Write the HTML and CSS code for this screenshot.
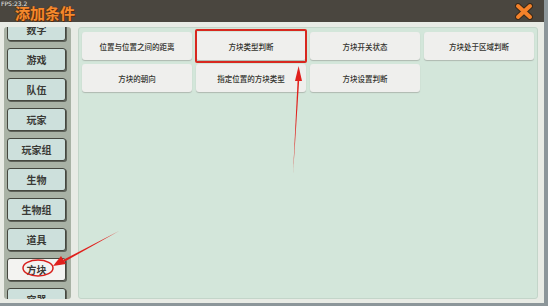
FILE: index.html
```html
<!DOCTYPE html>
<html lang="zh-CN">
<head>
    <meta charset="UTF-8">
    <title>添加条件</title>
    <link rel="stylesheet" href="styles.css">
</head>
<body>
<div class="fps">FPS:23.2</div>
<div class="header">
    <span class="title">添加条件</span>
    <svg class="close" width="18" height="17" viewBox="0 0 18 17">
        <path d="M3 3 L15 14 M15 3 L3 14" stroke="#3a2a1a" stroke-width="6" stroke-linecap="round"/>
        <path d="M3 3 L15 14 M15 3 L3 14" stroke="#f5822a" stroke-width="4" stroke-linecap="round"/>
    </svg>
</div>
<div class="frame">
    <div class="sidebar">
        <div class="menu">
            <div class="menu-item">数字</div>
            <div class="menu-item">游戏</div>
            <div class="menu-item">队伍</div>
            <div class="menu-item">玩家</div>
            <div class="menu-item">玩家组</div>
            <div class="menu-item">生物</div>
            <div class="menu-item">生物组</div>
            <div class="menu-item">道具</div>
            <div class="menu-item active">方块</div>
            <div class="menu-item">容器</div>
        </div>
    </div>
    <div class="panel">
        <div class="card">位置与位置之间的距离</div>
        <div class="card marked">方块类型判断</div>
        <div class="card">方块开关状态</div>
        <div class="card">方块处于区域判断</div>
        <div class="card">方块的朝向</div>
        <div class="card">指定位置的方块类型</div>
        <div class="card">方块设置判断</div>
    </div>
</div>

<!-- 标注 -->
<svg class="notes" width="548" height="306" viewBox="0 0 548 306">
    <ellipse cx="38" cy="268" rx="15" ry="8" fill="none" stroke="#d8201c" stroke-width="1.5"/>
    <path d="M293 174 L297.6 80 L299.2 80 Z" fill="#e0201c"/>
    <path d="M298.6 66 L295 81 L302 81 Z" fill="#e0201c"/>
    <path d="M119 231 L63 260 L64 262 Z" fill="#e0201c"/>
    <path d="M53 266 L61 256 L66 264 Z" fill="#e0201c"/>
</svg>
</body>
</html>
```

FILE: styles.css
```css
body {
    margin: 0;
    width: 548px;
    height: 306px;
    overflow: hidden;
    background-color: #8c969a;
    font-family: "Noto Sans CJK SC", "Noto Sans", sans-serif;
    position: relative;
}
.fps {
    position: absolute;
    top: 0;
    left: 1px;
    font-size: 6px;
    line-height: 7px;
    color: #e8e8e8;
    font-family: "DejaVu Sans", sans-serif;
}
.header {
    height: 22px;
    width: 544px;
    background-color: #4a463f;
    display: flex;
    align-items: center;
    justify-content: space-between;
    padding: 0 11px 0 15px;
    box-sizing: border-box;
}
.title {
    font-size: 15px;
    font-weight: bold;
    color: #f5892c;
    line-height: 22px;
    margin-top: 3px;
    text-shadow: 1px 1px 0 #5a2c0c, -1px 0 0 #6a3812;
}
.close {
    margin-top: 1px;
}
.frame {
    width: 544px;
    height: 281px;
    background-color: #e8ebe5;
    display: flex;
    gap: 7px;
    padding: 5px 6px 4px 4px;
    box-sizing: border-box;
}
.sidebar {
    width: 67px;
    background-color: #a9b2a5;
    border-radius: 3px;
    overflow: hidden;
    padding: 0 5px 0 3px;
    box-sizing: border-box;
}
.menu {
    margin-top: -9px;
}
.menu-item {
    height: 23px;
    margin-bottom: 7px;
    background-color: #cde0dc;
    border: 1px solid #45473f;
    border-radius: 3px;
    box-shadow: 1px 1px 0 #5e6259;
    box-sizing: border-box;
    font-size: 10px;
    font-weight: bold;
    color: #3a3a36;
    display: flex;
    align-items: center;
    justify-content: center;
}
.menu-item.active {
    background-color: #f3f3f1;
}
.panel {
    flex: 1;
    background-color: #d3e6da;
    border: 1px solid #c3d5c9;
    border-radius: 3px;
    padding: 4px 3px;
    display: grid;
    grid-template-columns: repeat(4, 1fr);
    grid-auto-rows: 28px;
    gap: 4px;
    align-content: start;
}
.card {
    background-color: #efefed;
    border-radius: 3px;
    box-shadow: 0 1px 1px #aeb8b0;
    font-size: 7.5px;
    font-weight: 500;
    color: #34342f;
    display: flex;
    align-items: center;
    justify-content: center;
    position: relative;
}
.card.marked::after {
    content: "";
    position: absolute;
    left: -1px;
    right: -1px;
    top: -3px;
    bottom: -3px;
    border: 2px solid #d8281f;
    border-radius: 2px;
}
.notes {
    position: absolute;
    top: 0;
    left: 0;
}
```
